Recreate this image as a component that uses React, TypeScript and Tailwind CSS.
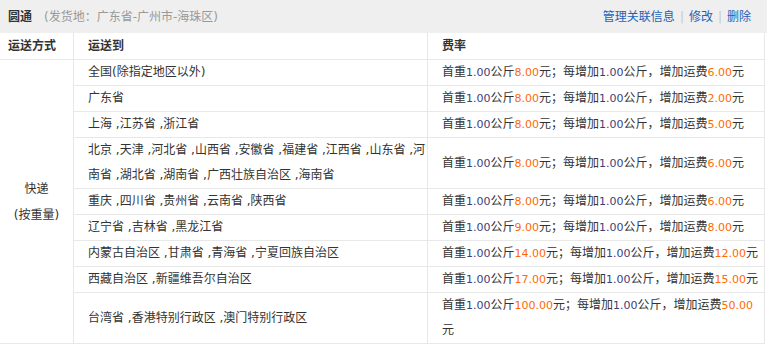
const rows = [
  { to: "全国(除指定地区以外)", first: "8.00", add: "6.00" },
  { to: "广东省", first: "8.00", add: "2.00" },
  { to: "上海 ,江苏省 ,浙江省", first: "8.00", add: "5.00" },
  {
    to: "北京 ,天津 ,河北省 ,山西省 ,安徽省 ,福建省 ,江西省 ,山东省 ,河南省 ,湖北省 ,湖南省 ,广西壮族自治区 ,海南省",
    first: "8.00",
    add: "6.00",
  },
  { to: "重庆 ,四川省 ,贵州省 ,云南省 ,陕西省", first: "8.00", add: "6.00" },
  { to: "辽宁省 ,吉林省 ,黑龙江省", first: "9.00", add: "8.00" },
  { to: "内蒙古自治区 ,甘肃省 ,青海省 ,宁夏回族自治区", first: "14.00", add: "12.00" },
  { to: "西藏自治区 ,新疆维吾尔自治区", first: "17.00", add: "15.00" },
  { to: "台湾省 ,香港特别行政区 ,澳门特别行政区", first: "100.00", add: "50.00" },
];

function Num({ v, hot }: { v: string; hot?: boolean }) {
  return (
    <span className={`font-['DejaVu_Sans'] text-[11px] ${hot ? "text-[#ff6a00]" : "text-[#3d3d7a]"}`}>
      {v}
    </span>
  );
}

export default function App() {
  return (
    <div className="w-[767px] h-[347px] bg-white text-[12px] text-[#333] font-['DejaVu_Sans','Noto_Sans_CJK_SC',sans-serif] overflow-hidden">
      <div className="h-[33px] bg-[#efefef] flex items-center justify-between pl-2 pr-4">
        <div className="flex items-center">
          <span className="font-bold text-[#333]">圆通</span>
          <span className="ml-3 text-[#999]">(发货地：广东省-广州市-海珠区)</span>
        </div>
        <div className="flex items-center text-[#1d62b7]">
          <a href="#">管理关联信息</a>
          <span className="mx-[5px] text-[#c8c8c8]">|</span>
          <a href="#">修改</a>
          <span className="mx-[5px] text-[#c8c8c8]">|</span>
          <a href="#">删除</a>
        </div>
      </div>

      <table className="w-[764px] table-fixed border-separate border-spacing-0 border-r border-[#e8e8e8]">
        <colgroup>
          <col className="w-[74px]" />
          <col className="w-[354px]" />
          <col className="w-[336px]" />
        </colgroup>
        <thead>
          <tr className="leading-[26px] text-left">
            <th className="pl-2 font-bold border-r border-b border-[#e8e8e8]">运送方式</th>
            <th className="pl-[14px] font-bold border-r border-b border-[#e8e8e8]">运送到</th>
            <th className="pl-[14px] font-bold border-b border-[#e8e8e8]">费率</th>
          </tr>
        </thead>
        <tbody>
          {rows.map((r, i) => (
            <tr key={i} className="leading-[25px]">
              {i === 0 && (
                <td rowSpan={rows.length} className="text-center align-middle border-r border-b border-[#e8e8e8]">
                  <div className="leading-[26px]">快递</div>
                  <div className="leading-[26px]">(按重量)</div>
                </td>
              )}
              <td className="pl-[14px] align-middle border-r border-b border-[#e8e8e8]">{r.to}</td>
              <td className="pl-[14px] align-middle border-b border-[#e8e8e8]">
                首重<Num v="1.00" />公斤<Num v={r.first} hot />元；每增加<Num v="1.00" />公斤，增加运费
                <Num v={r.add} hot />元
              </td>
            </tr>
          ))}
        </tbody>
      </table>
    </div>
  );
}
